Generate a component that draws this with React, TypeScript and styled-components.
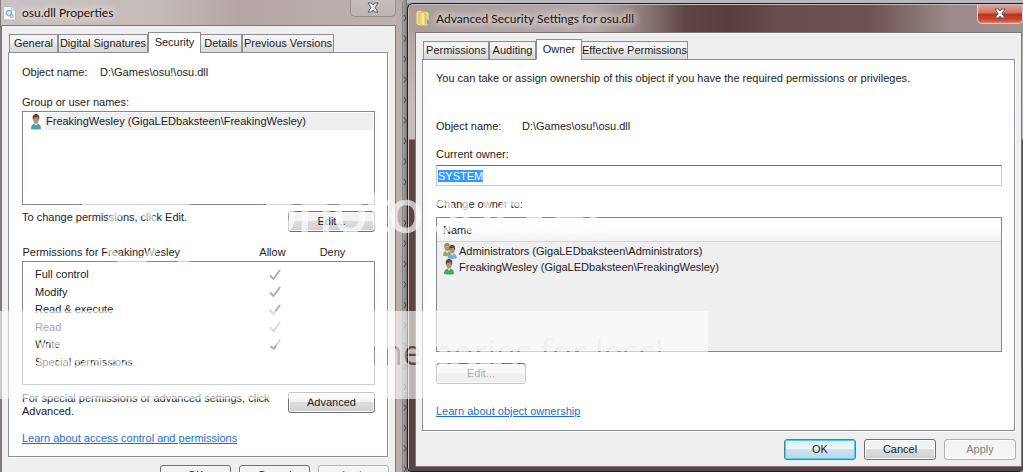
import React from 'react';
import styled, { createGlobalStyle, css } from 'styled-components';

const GlobalStyle = createGlobalStyle`
  * { box-sizing: border-box; }
  body { margin: 0; overflow: hidden; background: #8b8888; }
  body, button, input, table { font: 11px/13px "Liberation Sans", Arial, sans-serif; color: #1b1b1b; }
`;

const Desktop = styled.main`
  position: relative;
  display: grid;
  grid-template-columns: minmax(0, 403fr) 4px minmax(0, 616fr);
  height: 100vh;
  overflow: hidden;
  background: linear-gradient(#b9b9bd 0 3px, #85807f 4px);
`;

const Gutter = styled.div`
  background: linear-gradient(90deg, #a5a0a0, #777);
  overflow: hidden;
  svg { display: block; }
`;

const Window = styled.section<{ $active?: boolean }>`
  display: flex;
  flex-direction: column;
  min-width: 0;
  ${p => p.$active ? css`
    margin: 3px 0 0;
    height: calc(100vh - 3px);
    padding: 0 1px 4px 7px;
    border: 1px solid #211b1b;
    border-right-width: 0;
    border-radius: 6px 0 5px 5px;
    box-shadow: inset 1px 1px #c9bdbb;
    background: linear-gradient(180deg, #ab9d9c 0, #c7bcbb 100px, #c7bcbb 135px, #5f4645 136px, #5b4341 100%);
  ` : css`
    min-height: 500px;
    padding: 0 6px 0 1px;
    border-right: 1px solid #8b8484;
    border-radius: 0 4px 0 0;
    background: linear-gradient(90deg, #6c6768 0, #c4bab9 2px, #c8bfbe 60%, #b9adac 100%);
  `}
`;

const TitleBar = styled.header<{ $active?: boolean }>`
  display: flex;
  align-items: center;
  flex: none;
  gap: 6px;
  height: ${p => p.$active ? 27 : 25}px;
  padding-left: ${p => p.$active ? 7 : 2}px;
  background: ${p => p.$active
    ? 'linear-gradient(90deg, #ab9d9c 0, #b5a9a8 30%, #8d7c7b 38%, #5e4644 45%, #573f3d 52%, #674d4d 60%, #6d5252 75%, #9b8a89 88%, #a29291 100%)'
    : 'linear-gradient(90deg, #cbc3c2, #c4bab8 40%, #b3a6a4 60%, #bdb2b1)'};
  margin: ${p => p.$active ? '1px -1px 0 -6px' : '0'};
`;

const Title = styled.h1`
  flex: 1;
  margin: 0;
  font: 12px/18px Lato, "Noto Sans", sans-serif;
  color: #171313;
  white-space: nowrap;
  text-shadow: 0 0 6px #e8e0df, 0 0 8px #e8e0df, 0 0 10px #e8e0df;
`;

const CloseButton = styled.button<{ $active?: boolean }>`
  align-self: flex-start;
  display: grid;
  place-items: center;
  width: 46px;
  height: ${p => p.$active ? 19 : 17}px;
  padding: 0;
  border: 1px solid ${p => p.$active ? '#e2d0cd' : '#958d8d'};
  border-top: 0;
  border-radius: 0 0 5px 5px;
  background: ${p => p.$active
    ? 'linear-gradient(#e2a296 0, #d0705e 45%, #bd301a 50%, #c9472f 80%, #dc8068 100%)'
    : 'linear-gradient(#c7bfbe, #bdb3b2)'};
`;

const Client = styled.div<{ $gutter: number }>`
  display: flex;
  flex-direction: column;
  flex: 1;
  min-height: 0;
  padding: 6px ${p => p.$gutter}px 6px 6px;
  border: 1px solid #7f7879;
  background: #efefef;
`;

const Tabs = styled.nav`
  display: flex;
  align-items: flex-end;
  position: relative;
  height: 21px;
  padding-left: 1px;
  margin-bottom: -1px;
`;

const Tab = styled.button<{ $selected?: boolean; $w: number }>`
  width: ${p => p.$w}px;
  height: ${p => p.$selected ? 21 : 19}px;
  padding: 0;
  border: 1px solid #8c8e94;
  border-bottom-color: ${p => p.$selected ? '#fff' : '#8c8e94'};
  margin-right: ${p => p.$selected ? -1 : 0}px;
  white-space: nowrap;
  background: ${p => p.$selected ? '#fff' : 'linear-gradient(#f3f3f3 0 48%, #e4e4e4 52%, #d8d8d8)'};
`;

const Pane = styled.div<{ $wide?: boolean }>`
  display: flex;
  flex-direction: column;
  flex: none;
  height: ${p => p.$wide ? 372 : 405}px;
  padding: ${p => p.$wide ? '12px 12px 0 13px' : '13px 12px 0 13px'};
  border: 1px solid #8c8e9a;
  box-shadow: 1px 1px #fff;
  background: #fff;
`;

const Fact = styled.dl<{ $label: number }>`
  display: grid;
  grid-template-columns: ${p => p.$label}px 1fr;
  margin: 0;
  dd { margin: 0; white-space: nowrap; }
`;

const Note = styled.p`
  margin: 0;
`;

const Caption = styled.label<{ $top: number; $gap: number }>`
  margin: ${p => p.$top}px 0 ${p => p.$gap}px;
`;

const UserList = styled.ul<{ $h: number; $grey?: boolean }>`
  height: ${p => p.$h}px;
  flex: none;
  margin: 0;
  padding: ${p => p.$grey ? 0 : 1}px;
  list-style: none;
  border: 1px solid #828790;
  background: ${p => p.$grey ? '#efefef' : '#fff'};
`;

const ListHeader = styled.li`
  height: 24px;
  padding: 6px 6px 0;
  margin-bottom: 1px;
  border-bottom: 1px solid #d5d5d5;
  background: linear-gradient(#fff 40%, #f2f3f5);
`;

const User = styled.li<{ $selected?: boolean }>`
  display: flex;
  align-items: center;
  gap: 1px;
  height: ${p => p.$selected ? 17 : 16}px;
  padding-left: 5px;
  svg { flex: none; }
  span { flex: 1; line-height: 17px; padding-left: 1px; background: ${p => p.$selected ? '#efefef' : 'none'}; }
`;

const Row = styled.div<{ $top: number }>`
  display: flex;
  justify-content: space-between;
  align-items: flex-start;
  margin-top: ${p => p.$top}px;
`;

const Footer = styled.footer`
  display: flex;
  justify-content: flex-end;
  gap: 8px;
  padding-top: 8px;
  margin-right: -1px;
`;

const PushButton = styled.button<{ $w: number; $primary?: boolean }>`
  width: ${p => p.$w}px;
  height: 21px;
  flex: none;
  padding: 0;
  border: 1px solid ${p => p.$primary ? '#2c8fb5' : '#707070'};
  border-radius: 3px;
  box-shadow: inset 0 0 0 1px ${p => p.$primary ? '#43d1f7' : '#fafafa'};
  background: ${p => p.$primary
    ? 'linear-gradient(#e9f3f8 0 45%, #cfe3ed 50%, #bcd5e2)'
    : 'linear-gradient(#f2f2f2 0 45%, #dddddd 50%, #cfcfcf)'};
  &:disabled {
    color: #838383;
    border-color: #adb2b5;
    background: #f4f4f4;
  }
`;

const CoveredButton = styled(PushButton)`
  &:disabled {
    color: #333;
    border-color: #707070;
    background: linear-gradient(#f0f0f0 0 45%, #dcdcdc 50%, #d4d4d4);
  }
`;

const Link = styled.a<{ $top: number }>`
  align-self: flex-start;
  margin-top: ${p => p.$top}px;
  color: #1b6fd0;
  text-decoration: underline;
`;

const PermissionTable = styled.table`
  width: 100%;
  margin-top: 14px;
  border-collapse: collapse;
  table-layout: fixed;
  th, td { padding: 0; font-weight: normal; text-align: center; }
  th:first-child, td:first-child { text-align: left; }
  col:nth-child(2) { width: 60px; }
  col:nth-child(3) { width: 72px; }
  thead th { height: 15px; padding-bottom: 2px; }
  thead th:last-child { padding-right: 12px; }
  tbody { border: 1px solid #828790; }
  tbody th { padding-left: 12px; height: 18px; }
  tbody tr:nth-child(even) th { height: 17px; }
  tbody tr:first-child th { height: 22px; padding-top: 4px; }
  tbody tr:last-child th { height: 31px; padding-bottom: 13px; }
  tbody td { padding-left: 4px; }
  tbody tr:first-child td { padding-top: 4px; }
  td svg { display: block; margin: 0 auto; }
`;

const HiddenTick = styled.input`
  position: absolute;
  opacity: 0;
  width: 12px;
  height: 12px;
  margin: 0;
`;

const OwnerField = styled.input`
  width: 100%;
  height: 21px;
  flex: none;
  padding: 2px 1px;
  border: 1px solid #b5cfe7;
  border-top-color: #3d7bad;
  outline: none;
  background: #fff;
  &::selection { color: #fff; background: #3399ff; }
`;

const Watermark = styled.svg`
  position: absolute;
  top: 0;
  left: 0;
  width: 1023px;
  height: 472px;
  pointer-events: none;
`;

const CloseGlyph = ({ dark }: { dark?: boolean }) => (
  <svg width="14" height="12" viewBox="0 0 14 12" aria-hidden="true">
    <path d="M2 1h3.5L7 3 8.500 1H12L9 5.500 12 10H8.500L7 8 5.500 10H2l3-4.500z" fill={dark ? '#f4f2f2' : '#fff'} stroke="#565a6c" strokeWidth="1" />
  </svg>
);

const FileIcon = () => (
  <svg width="13" height="16" viewBox="0 0 13 16" aria-hidden="true">
    <path d="M.5 1.500h8l4 3.500v10H.5z" fill="#f5f7f8" stroke="#b6b9bd" />
    <path d="M8.500 1.500V5h4" fill="#dfe4e8" stroke="#c0c4c8" />
    <circle cx="6" cy="8" r="2.600" fill="#d5e7ef" stroke="#8fb2c6" strokeWidth="1.400" />
    <circle cx="8.500" cy="11" r="1.500" fill="#e3edf2" stroke="#93b3c4" strokeWidth="1.200" />
  </svg>
);

const FolderIcon = () => (
  <svg width="14" height="17" viewBox="0 0 14 17" aria-hidden="true">
    <path d="M1 2l4-1v14l-4-1zM5 3l2-1 5 1v12H5z" fill="#e4cf66" stroke="#f5e89b" />
    <path d="M5 2l4 1v13l-4-1z" fill="#f6e799" stroke="#d2b644" strokeWidth=".7" />
    <path d="M11 9l2 2v3l-2 1z" fill="#62a6c4" />
  </svg>
);

const Person = ({ x = 0, coat = '#39a493', hair = '#5b493e' }) => (
  <g transform={`translate(${x})`}>
    <path d="M1 15c0-3 1-5 4-5.500h2c3 .5 4 2.500 4 5.500-3 .7-7 .7-10 0z" fill={coat} />
    <path d="M4.500 9.500L6 12l1.500-2.500z" fill="#e8f5f1" />
    <path d="M3 4c0 3.500 1 5.500 3 5.500S9 7.500 9 4z" fill="#b98e72" />
    <path d="M3 6c-1-4 .5-6 3-6s4 2 3 6c-.5-1.500-1-2-1.500-2.500L4 4z" fill={hair} />
  </g>
);

const UserIcon = ({ coat }: { coat?: string }) => (
  <svg width="15" height="16" viewBox="-1 0 15 16" aria-hidden="true"><Person coat={coat} /></svg>
);

const GroupIcon = () => (
  <svg width="15" height="16" viewBox="0 0 15 16" aria-hidden="true">
    <g transform="scale(.85)"><Person coat="#88b65b" hair="#ae8b35" /></g>
    <g transform="translate(3 2) scale(.9)"><Person x={2} coat="#7faade" /></g>
  </svg>
);

const Tick = ({ name, faded }: { name: string; faded?: boolean }) => (
  <label>
    <HiddenTick type="checkbox" checked disabled readOnly aria-label={`Allow ${name}`} />
    <svg width="12" height="12" viewBox="0 0 12 12" aria-hidden="true">
      <path d="M1 6.500L4.500 10 11 1" fill="none" stroke={faded ? '#a2a2a2' : '#acacac'} strokeWidth="1.800" />
    </svg>
  </label>
);

const permissions = ['Full control', 'Modify', 'Read & execute', 'Read', 'Write', 'Special permissions'];

const PropertiesWindow = () => (
  <Window>
    <TitleBar>
      <FileIcon />
      <Title>osu.dll Properties</Title>
      <CloseButton aria-label="Close"><CloseGlyph dark /></CloseButton>
    </TitleBar>
    <Client $gutter={7}>
      <Tabs>
        <Tab $w={49}>General</Tab>
        <Tab $w={90}>Digital Signatures</Tab>
        <Tab $w={53} $selected>Security</Tab>
        <Tab $w={42}>Details</Tab>
        <Tab $w={92}>Previous Versions</Tab>
      </Tabs>
      <Pane>
        <Fact $label={78}><dt>Object name:</dt><dd>D:\Games\osu!\osu.dll</dd></Fact>
        <Caption as="div" $top={17} $gap={2}>Group or user names:</Caption>
        <UserList $h={94}>
          <User $selected><UserIcon coat="#4ba0a8" /><span>FreakingWesley (GigaLEDbaksteen\FreakingWesley)</span></User>
        </UserList>
        <Row $top={6}>
          <Note>To change permissions, click Edit.</Note>
          <PushButton $w={87}>Edit...</PushButton>
        </Row>
        <PermissionTable>
          <colgroup><col /><col /><col /></colgroup>
          <thead><tr><th>Permissions for FreakingWesley</th><th>Allow</th><th>Deny</th></tr></thead>
          <tbody>
            {permissions.map((name, i) => (
              <tr key={name}>
                <th scope="row">{name}</th>
                <td>{i < 5 && <Tick name={name} faded={i > 2} />}</td>
                <td />
              </tr>
            ))}
          </tbody>
        </PermissionTable>
        <Row $top={7}>
          <Note>For special permissions or advanced settings, click<br />Advanced.</Note>
          <PushButton $w={87}>Advanced</PushButton>
        </Row>
        <Link href="#access" $top={14}>Learn about access control and permissions</Link>
      </Pane>
      <Footer>
        <PushButton $w={71}>OK</PushButton>
        <PushButton $w={71}>Cancel</PushButton>
        <PushButton $w={71} disabled>Apply</PushButton>
      </Footer>
    </Client>
  </Window>
);

const SecurityWindow = () => {
  const owner = React.useRef<HTMLInputElement>(null);
  React.useEffect(() => {
    owner.current?.focus();
    owner.current?.select();
  }, []);
  return (
    <Window $active>
      <TitleBar $active>
        <FolderIcon />
        <Title>Advanced Security Settings for osu.dll</Title>
        <CloseButton $active aria-label="Close"><CloseGlyph /></CloseButton>
      </TitleBar>
      <Client $gutter={6}>
        <Tabs>
          <Tab $w={66}>Permissions</Tab>
          <Tab $w={47}>Auditing</Tab>
          <Tab $w={46} $selected>Owner</Tab>
          <Tab $w={107}>Effective Permissions</Tab>
        </Tabs>
        <Pane $wide>
          <Note>You can take or assign ownership of this object if you have the required permissions or privileges.</Note>
          <Row $top={35}><Fact $label={86}><dt>Object name:</dt><dd>D:\Games\osu!\osu.dll</dd></Fact></Row>
          <Caption htmlFor="owner" $top={15} $gap={4}>Current owner:</Caption>
          <OwnerField id="owner" ref={owner} defaultValue="SYSTEM" readOnly />
          <Caption as="div" $top={12} $gap={6}>Change owner to:</Caption>
          <UserList $h={135} $grey>
            <ListHeader>Name</ListHeader>
            <User><GroupIcon /><span>Administrators (GigaLEDbaksteen\Administrators)</span></User>
            <User><UserIcon coat="#43a46d" /><span>FreakingWesley (GigaLEDbaksteen\FreakingWesley)</span></User>
          </UserList>
          <Row $top={11}><CoveredButton $w={90} disabled>Edit...</CoveredButton></Row>
          <Link href="#ownership" $top={21}>Learn about object ownership</Link>
        </Pane>
        <Footer>
          <PushButton $w={72} $primary>OK</PushButton>
          <PushButton $w={72}>Cancel</PushButton>
          <PushButton $w={72} disabled>Apply</PushButton>
        </Footer>
      </Client>
    </Window>
  );
};

export default function App() {
  return (
    <>
      <GlobalStyle />
      <Desktop>
        <PropertiesWindow />
        <Gutter>
          <svg width="4" height="472" aria-hidden="true">
            {Array.from({ length: 23 }, (_, i) => (
              <path key={i} d={`M1 ${15 + i * 20.5}l2 3-2 3`} fill="none" stroke="#4d4444" />
            ))}
          </svg>
        </Gutter>
        <SecurityWindow />
        <Watermark viewBox="0 0 1023 472" aria-hidden="true">
          <mask id="slogan">
            <rect y="311" width="708" height="88" fill="#fff" />
            <text x="664" y="365" textAnchor="end" fontFamily="Open Sans, sans-serif" fontSize="34" fill="#000">Protect more of your memories for less!</text>
          </mask>
          <rect y="311" width="708" height="88" fill="#fff" opacity=".6" mask="url(#slogan)" />
          <g fill="none" stroke="#fff" strokeWidth="7" opacity=".6">
            <circle cx="132" cy="236" r="26" />
            <path d="M82 206h96q20 0 20 20v16q0 18-20 18" />
          </g>
          <text x="262" y="232" fontFamily="Open Sans, sans-serif" fontSize="58" fill="#fff" stroke="#fff" strokeWidth="1.500" opacity=".65">photobucket</text>
        </Watermark>
      </Desktop>
    </>
  );
}
